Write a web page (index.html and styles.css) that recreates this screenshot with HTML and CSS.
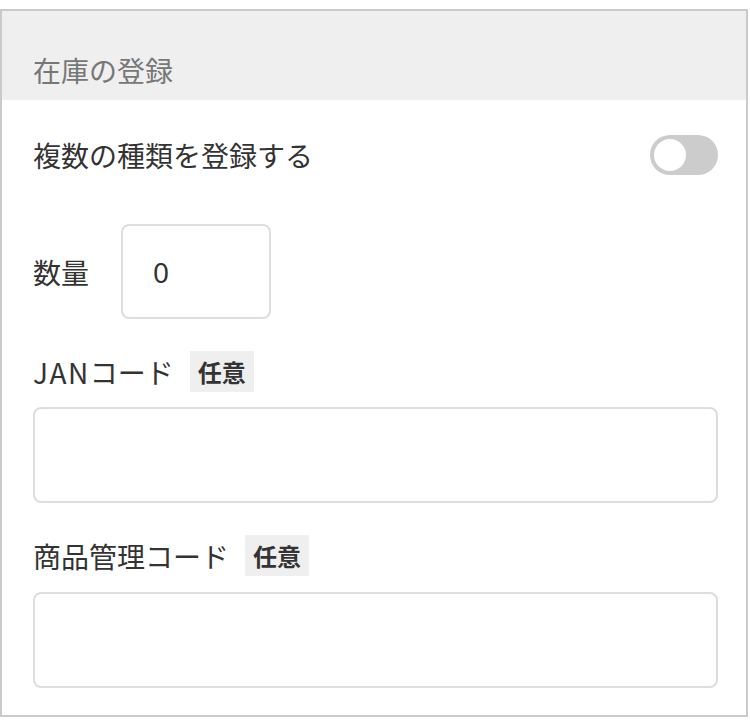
FILE: index.html
```html
<!DOCTYPE html>
<html lang="ja">
<head>
<meta charset="utf-8">
<link rel="stylesheet" href="styles.css">
</head>
<body>
<div class="card">
  <div class="card-header">在庫の登録</div>
  <div class="card-body">
    <div class="row toggle-row">
      <span class="label">複数の種類を登録する</span>
      <span class="toggle"><span class="knob"></span></span>
    </div>
    <div class="row qty-row">
      <span class="label">数量</span>
      <div class="qty-input">0</div>
    </div>
    <div class="row field-label first-label">
      <span class="label"><span class="latin">JAN</span>コード</span>
      <span class="badge">任意</span>
    </div>
    <div class="text-input"></div>
    <div class="row field-label">
      <span class="label">商品管理コード</span>
      <span class="badge">任意</span>
    </div>
    <div class="text-input second"></div>
  </div>
</div>
</body>
</html>
```
FILE: styles.css
```css
html, body {
  margin: 0;
  padding: 0;
  background: #fff;
}
body {
  padding-top: 9px;
  font-family: "Noto Sans CJK JP", "Noto Sans", sans-serif;
  color: #333;
}
.card {
  box-sizing: border-box;
  width: 748px;
  border: 2px solid #cacaca;
  background: #fff;
}
.card-header {
  box-sizing: border-box;
  height: 89px;
  background: #efefef;
  padding: 38px 0 0 31px;
  font-size: 28px;
  line-height: 42px;
  color: #777;
}
.card-body {
  padding: 0 28px 27px 31px;
}
.row {
  display: flex;
  align-items: center;
}
.label {
  font-size: 28px;
  line-height: 40px;
  color: #333;
}
.latin {
  letter-spacing: 1.5px;
}
.toggle-row {
  margin-top: 35px;
  height: 40px;
  justify-content: space-between;
}
.toggle {
  position: relative;
  width: 68px;
  height: 40px;
  border-radius: 20px;
  background: #cccccc;
}
.knob {
  position: absolute;
  left: 4px;
  top: 4px;
  width: 32px;
  height: 32px;
  border-radius: 50%;
  background: #fff;
}
.qty-row {
  margin-top: 49px;
  height: 95px;
  gap: 32px;
}
.qty-input {
  box-sizing: border-box;
  width: 150px;
  height: 95px;
  border: 2px solid #dddddd;
  border-radius: 8px;
  padding-left: 30px;
  display: flex;
  align-items: center;
  font-family: "Noto Sans", sans-serif;
  font-size: 28px;
  color: #333;
}
.field-label {
  margin-top: 32px;
  height: 41px;
  gap: 16px;
}
.badge {
  height: 41px;
  line-height: 41px;
  padding: 0 8px;
  background: #efefef;
  font-size: 24px;
  font-weight: bold;
  color: #333;
}
.text-input {
  box-sizing: border-box;
  height: 96px;
  margin-top: 15px;
  border: 2px solid #dddddd;
  border-radius: 8px;
}
.text-input.second {
  margin-top: 16px;
}
```
